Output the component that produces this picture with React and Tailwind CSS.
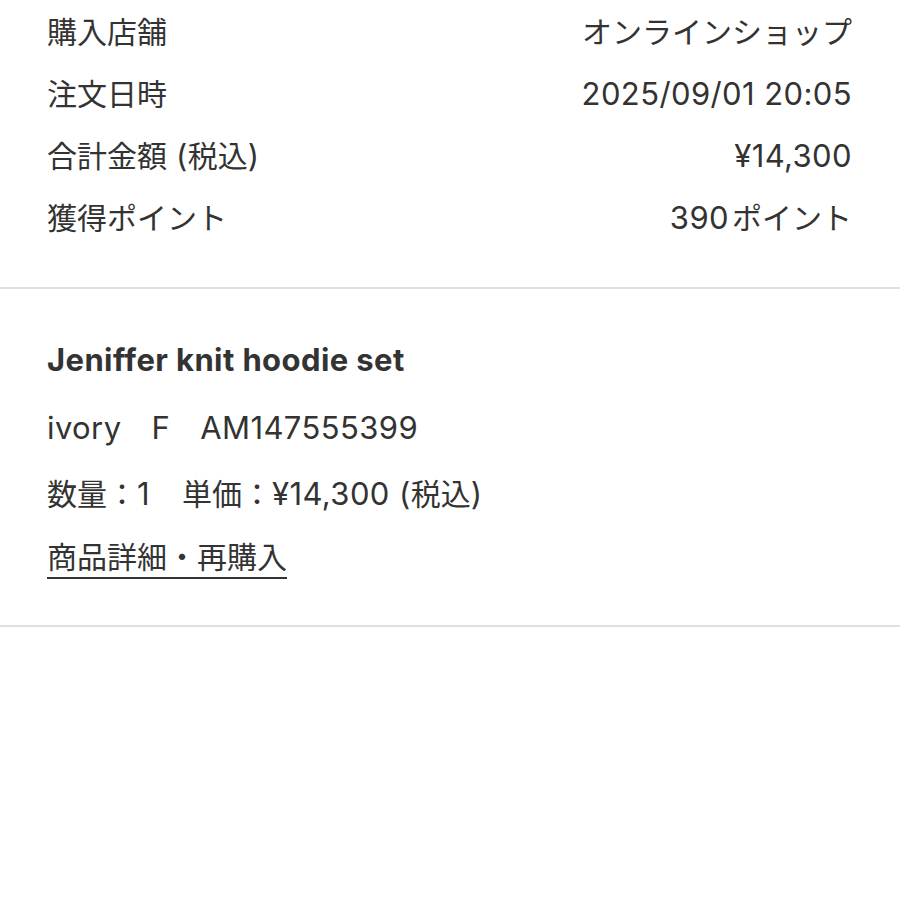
import React from "react";

const font = {
    fontFamily: '"Inter", "Noto Sans CJK JP", sans-serif',
};

// latin runs are set a bit larger and wider than the CJK glyphs
const Txt = ({ children }) => {
    const partes = String(children).split(/([\x20-\x7E¥]+)/).filter(Boolean);
    return partes.map((p, i) =>
        /^[\x20-\x7E¥]+$/.test(p) ? (
            <span key={i} className="text-[31px] tracking-[0.4px]">
                {p}
            </span>
        ) : (
            <span key={i}>{p}</span>
        )
    );
};

const detalhes = [
    { label: "購入店舗", valor: <Txt>オンラインショップ</Txt> },
    { label: "注文日時", valor: <Txt>2025/09/01 20:05</Txt> },
    { label: "合計金額 (税込)", valor: <Txt>¥14,300</Txt> },
    {
        label: "獲得ポイント",
        valor: (
            <>
                <Txt>390</Txt>
                <span className="ml-[3px]">ポイント</span>
            </>
        ),
    },
];

export default function App() {
    return (
        <div
            className="min-h-[900px] w-[900px] bg-white text-[30px] text-[#333333]"
            style={font}
        >
            <div className="pl-[47px] pr-[48px] pt-[1px] pb-[38px]">
                {detalhes.map((d) => (
                    <div
                        key={d.label}
                        className="flex h-[62px] items-center justify-between whitespace-pre"
                    >
                        <span>
                            <Txt>{d.label}</Txt>
                        </span>
                        <span>{d.valor}</span>
                    </div>
                ))}
            </div>

            <div className="h-[2px] bg-[#e0e0e0]" />

            <div className="pl-[47px] pr-[48px] pt-[51px] pb-[45px]">
                <div className="flex h-[40px] items-center font-bold">
                    <Txt>Jeniffer knit hoodie set</Txt>
                </div>
                <div className="mt-[16px] flex h-[64px] items-center gap-[30px]">
                    <span>
                        <Txt>ivory</Txt>
                    </span>
                    <span>
                        <Txt>F</Txt>
                    </span>
                    <span>
                        <Txt>AM147555399</Txt>
                    </span>
                </div>
                <div className="mt-[2px] flex h-[64px] items-center whitespace-pre">
                    <span>
                        <Txt>数量：1</Txt>
                    </span>
                    <span className="ml-[32px]">
                        <Txt>単価：¥14,300 (税込)</Txt>
                    </span>
                </div>
                <div className="mt-[9px]">
                    <a
                        href="#"
                        className="inline-block border-b-2 border-[#333333] pb-[2px] leading-[36px]"
                    >
                        商品詳細・再購入
                    </a>
                </div>
            </div>

            <div className="h-[2px] bg-[#e0e0e0]" />
        </div>
    );
}
